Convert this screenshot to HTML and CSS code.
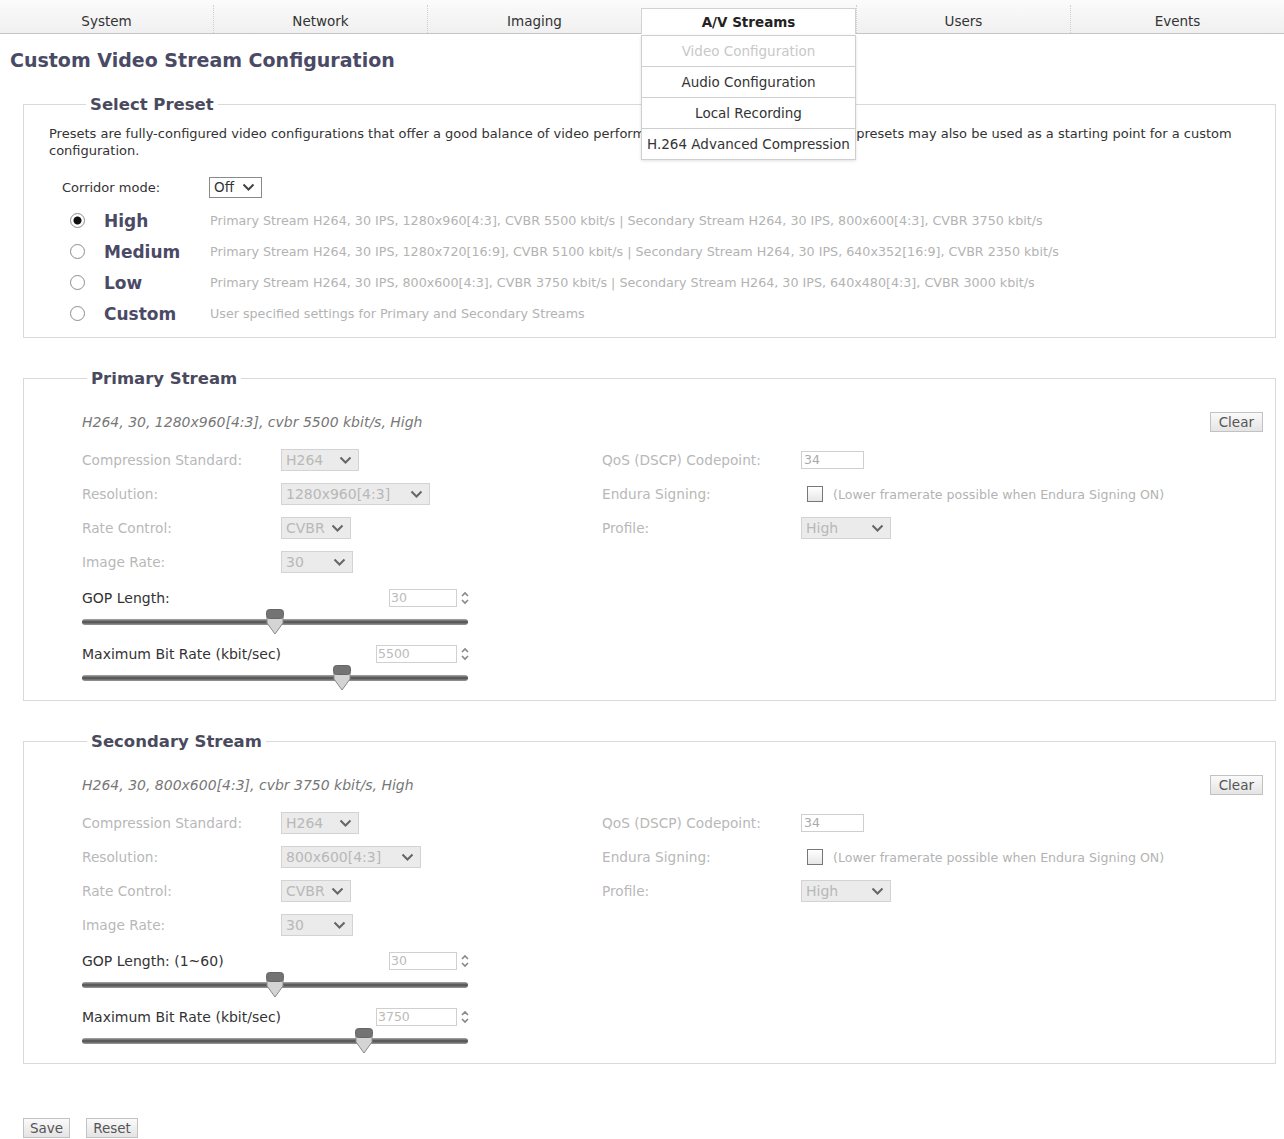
FILE: index.html
```html
<!DOCTYPE html>
<html lang="en">
<head>
    <meta charset="UTF-8">
    <meta name="viewport" content="width=device-width, initial-scale=1.0">
    <title>Video Configuration</title>
    <link rel="stylesheet" href="styles.css">
</head>
<body>
    <nav class="tabs">
        <div class="tab">System</div>
        <div class="tab">Network</div>
        <div class="tab">Imaging</div>
        <div class="tab active">A/V Streams
            <div class="menu">
                <div class="menu-item disabled">Video Configuration</div>
                <div class="menu-item">Audio Configuration</div>
                <div class="menu-item">Local Recording</div>
                <div class="menu-item">H.264 Advanced Compression</div>
            </div>
        </div>
        <div class="tab">Users</div>
        <div class="tab">Events</div>
    </nav>

    <div class="page">
        <h1 class="title">Custom Video Stream Configuration</h1>

        <fieldset class="box preset">
            <legend>Select Preset</legend>
            <p class="intro">Presets are fully-configured video configurations that offer a good balance of video performance and bandwidth use. These presets may also be used as a starting point for a custom configuration.</p>
            <div class="corridor">
                <span class="corridor-label">Corridor mode:</span>
                <div class="dd dd-on dd-corridor"><span>Off</span><svg class="chev" width="13" height="8" viewBox="0 0 13 8"><path d="M1.5 1.5 L6.5 6.5 L11.5 1.5" fill="none" stroke="#444" stroke-width="2"/></svg></div>
            </div>
            <div class="presets">
                <div class="radio checked"></div><span class="preset-name">High</span><span class="preset-desc">Primary Stream H264, 30 IPS, 1280x960[4:3], CVBR 5500 kbit/s | Secondary Stream H264, 30 IPS, 800x600[4:3], CVBR 3750 kbit/s</span>
                <div class="radio"></div><span class="preset-name">Medium</span><span class="preset-desc">Primary Stream H264, 30 IPS, 1280x720[16:9], CVBR 5100 kbit/s | Secondary Stream H264, 30 IPS, 640x352[16:9], CVBR 2350 kbit/s</span>
                <div class="radio"></div><span class="preset-name">Low</span><span class="preset-desc">Primary Stream H264, 30 IPS, 800x600[4:3], CVBR 3750 kbit/s | Secondary Stream H264, 30 IPS, 640x480[4:3], CVBR 3000 kbit/s</span>
                <div class="radio"></div><span class="preset-name">Custom</span><span class="preset-desc">User specified settings for Primary and Secondary Streams</span>
            </div>
        </fieldset>

        <fieldset class="box stream">
            <legend>Primary Stream</legend>
            <div class="summary">
                <span class="summary-text">H264, 30, 1280x960[4:3], cvbr 5500 kbit/s, High</span>
                <button class="btn">Clear</button>
            </div>
            <div class="stream-body">
                <div class="stream-left">
                    <div class="field"><span class="field-label">Compression Standard:</span><div class="dd dd-std"><span>H264</span><svg class="chev" width="13" height="8" viewBox="0 0 13 8"><path d="M1.5 1.5 L6.5 6.5 L11.5 1.5" fill="none" stroke="#666" stroke-width="2"/></svg></div></div>
                    <div class="field"><span class="field-label">Resolution:</span><div class="dd dd-res"><span>1280x960[4:3]</span><svg class="chev" width="13" height="8" viewBox="0 0 13 8"><path d="M1.5 1.5 L6.5 6.5 L11.5 1.5" fill="none" stroke="#666" stroke-width="2"/></svg></div></div>
                    <div class="field"><span class="field-label">Rate Control:</span><div class="dd dd-rate"><span>CVBR</span><svg class="chev" width="13" height="8" viewBox="0 0 13 8"><path d="M1.5 1.5 L6.5 6.5 L11.5 1.5" fill="none" stroke="#666" stroke-width="2"/></svg></div></div>
                    <div class="field"><span class="field-label">Image Rate:</span><div class="dd dd-fps"><span>30</span><svg class="chev" width="13" height="8" viewBox="0 0 13 8"><path d="M1.5 1.5 L6.5 6.5 L11.5 1.5" fill="none" stroke="#666" stroke-width="2"/></svg></div></div>

                    <div class="slider-group">
                        <div class="slider-head">
                            <span class="slider-label">GOP Length:</span>
                            <div class="spin"><span class="num num-short">30</span><svg width="10" height="16" viewBox="0 0 10 16"><path d="M2 6 L5 3 L8 6 M2 10 L5 13 L8 10" fill="none" stroke="#888" stroke-width="1.6"/></svg></div>
                        </div>
                        <div class="slider">
                            <div class="track"></div>
                            <svg class="thumb" style="left: 50%" width="20" height="27" viewBox="0 0 20 27"><path d="M2 9 V15 L10 26 L18 15 V9 Z" fill="#d4d4d4" stroke="#8a8a8a"/><rect x="1.5" y="1.5" width="17" height="9" rx="3" fill="#737373" stroke="#666"/></svg>
                        </div>
                    </div>
                    <div class="slider-group">
                        <div class="slider-head">
                            <span class="slider-label">Maximum Bit Rate (kbit/sec)</span>
                            <div class="spin"><span class="num">5500</span><svg width="10" height="16" viewBox="0 0 10 16"><path d="M2 6 L5 3 L8 6 M2 10 L5 13 L8 10" fill="none" stroke="#888" stroke-width="1.6"/></svg></div>
                        </div>
                        <div class="slider">
                            <div class="track"></div>
                            <svg class="thumb" style="left: 67.4%" width="20" height="27" viewBox="0 0 20 27"><path d="M2 9 V15 L10 26 L18 15 V9 Z" fill="#d4d4d4" stroke="#8a8a8a"/><rect x="1.5" y="1.5" width="17" height="9" rx="3" fill="#737373" stroke="#666"/></svg>
                        </div>
                    </div>
                </div>
                <div class="stream-right">
                    <div class="field"><span class="field-label">QoS (DSCP) Codepoint:</span><span class="text-box">34</span></div>
                    <div class="field"><span class="field-label">Endura Signing:</span><span class="check"></span><span class="hint">(Lower framerate possible when Endura Signing ON)</span></div>
                    <div class="field"><span class="field-label">Profile:</span><div class="dd dd-profile"><span>High</span><svg class="chev" width="13" height="8" viewBox="0 0 13 8"><path d="M1.5 1.5 L6.5 6.5 L11.5 1.5" fill="none" stroke="#666" stroke-width="2"/></svg></div></div>
                </div>
            </div>
        </fieldset>

        <fieldset class="box stream">
            <legend>Secondary Stream</legend>
            <div class="summary">
                <span class="summary-text">H264, 30, 800x600[4:3], cvbr 3750 kbit/s, High</span>
                <button class="btn">Clear</button>
            </div>
            <div class="stream-body">
                <div class="stream-left">
                    <div class="field"><span class="field-label">Compression Standard:</span><div class="dd dd-std"><span>H264</span><svg class="chev" width="13" height="8" viewBox="0 0 13 8"><path d="M1.5 1.5 L6.5 6.5 L11.5 1.5" fill="none" stroke="#666" stroke-width="2"/></svg></div></div>
                    <div class="field"><span class="field-label">Resolution:</span><div class="dd dd-res2"><span>800x600[4:3]</span><svg class="chev" width="13" height="8" viewBox="0 0 13 8"><path d="M1.5 1.5 L6.5 6.5 L11.5 1.5" fill="none" stroke="#666" stroke-width="2"/></svg></div></div>
                    <div class="field"><span class="field-label">Rate Control:</span><div class="dd dd-rate"><span>CVBR</span><svg class="chev" width="13" height="8" viewBox="0 0 13 8"><path d="M1.5 1.5 L6.5 6.5 L11.5 1.5" fill="none" stroke="#666" stroke-width="2"/></svg></div></div>
                    <div class="field"><span class="field-label">Image Rate:</span><div class="dd dd-fps"><span>30</span><svg class="chev" width="13" height="8" viewBox="0 0 13 8"><path d="M1.5 1.5 L6.5 6.5 L11.5 1.5" fill="none" stroke="#666" stroke-width="2"/></svg></div></div>

                    <div class="slider-group">
                        <div class="slider-head">
                            <span class="slider-label">GOP Length: (1~60)</span>
                            <div class="spin"><span class="num num-short">30</span><svg width="10" height="16" viewBox="0 0 10 16"><path d="M2 6 L5 3 L8 6 M2 10 L5 13 L8 10" fill="none" stroke="#888" stroke-width="1.6"/></svg></div>
                        </div>
                        <div class="slider">
                            <div class="track"></div>
                            <svg class="thumb" style="left: 50%" width="20" height="27" viewBox="0 0 20 27"><path d="M2 9 V15 L10 26 L18 15 V9 Z" fill="#d4d4d4" stroke="#8a8a8a"/><rect x="1.5" y="1.5" width="17" height="9" rx="3" fill="#737373" stroke="#666"/></svg>
                        </div>
                    </div>
                    <div class="slider-group">
                        <div class="slider-head">
                            <span class="slider-label">Maximum Bit Rate (kbit/sec)</span>
                            <div class="spin"><span class="num">3750</span><svg width="10" height="16" viewBox="0 0 10 16"><path d="M2 6 L5 3 L8 6 M2 10 L5 13 L8 10" fill="none" stroke="#888" stroke-width="1.6"/></svg></div>
                        </div>
                        <div class="slider">
                            <div class="track"></div>
                            <svg class="thumb" style="left: 73.1%" width="20" height="27" viewBox="0 0 20 27"><path d="M2 9 V15 L10 26 L18 15 V9 Z" fill="#d4d4d4" stroke="#8a8a8a"/><rect x="1.5" y="1.5" width="17" height="9" rx="3" fill="#737373" stroke="#666"/></svg>
                        </div>
                    </div>
                </div>
                <div class="stream-right">
                    <div class="field"><span class="field-label">QoS (DSCP) Codepoint:</span><span class="text-box">34</span></div>
                    <div class="field"><span class="field-label">Endura Signing:</span><span class="check"></span><span class="hint">(Lower framerate possible when Endura Signing ON)</span></div>
                    <div class="field"><span class="field-label">Profile:</span><div class="dd dd-profile"><span>High</span><svg class="chev" width="13" height="8" viewBox="0 0 13 8"><path d="M1.5 1.5 L6.5 6.5 L11.5 1.5" fill="none" stroke="#666" stroke-width="2"/></svg></div></div>
                </div>
            </div>
        </fieldset>

        <div class="actions">
            <button class="btn btn-save">Save</button>
            <button class="btn btn-reset">Reset</button>
        </div>
    </div>
</body>
</html>
```

FILE: styles.css
```css
* {
    box-sizing: border-box;
}
body {
    margin: 0;
    background: #fff;
    color: #333;
    font-family: "DejaVu Sans", Verdana, sans-serif;
    font-size: 13px;
}

/* top navigation */
.tabs {
    display: flex;
    height: 34px;
    background: linear-gradient(#fbfbfb, #f0f0f0);
    border-bottom: 1px solid #c4c4c4;
}
.tab {
    flex: 1;
    height: 28px;
    margin-top: 5px;
    padding-top: 4px;
    display: flex;
    justify-content: center;
    align-items: center;
    border-left: 1px dotted #cfcfcf;
    font-size: 13.5px;
    color: #333;
}
.tab:first-child {
    border-left: none;
}
.tab.active {
    position: relative;
    height: 26px;
    margin-top: 8px;
    padding-top: 0;
    background: #fff;
    border: 1px solid #d2d2d2;
    border-bottom: none;
    font-weight: bold;
    color: #222;
}
.menu {
    position: absolute;
    top: 26px;
    left: -1px;
    right: -1px;
    background: #fff;
    border: 1px solid #cfcfcf;
    border-bottom: none;
    box-shadow: 0 1px 3px rgba(0, 0, 0, 0.12);
    font-weight: normal;
    z-index: 5;
}
.menu-item {
    height: 31px;
    display: flex;
    justify-content: center;
    align-items: center;
    border-bottom: 1px solid #cfcfcf;
    font-size: 13.5px;
    color: #333;
    white-space: nowrap;
}
.menu-item.disabled {
    color: #c8c8c8;
}

.page {
    padding: 0 8px 0 23px;
}
.title {
    margin: 15px 0 24px -13px;
    font-size: 19px;
    color: #4a4a66;
}

/* fieldsets */
.box {
    margin: 0;
    border: 1px solid #d9d9d9;
    min-width: 0;
}
.box legend {
    padding: 0 4px;
    font-size: 16.5px;
    font-weight: bold;
    color: #4a4a5e;
}
.preset {
    padding: 11px 8px 8px 25px;
}
.preset legend {
    margin-left: 37px;
}
.intro {
    margin: 0;
    font-size: 13px;
    line-height: 17px;
    color: #333;
}
.corridor {
    display: flex;
    align-items: center;
    height: 24px;
    margin-top: 16px;
    padding-left: 13px;
}
.corridor-label {
    width: 147px;
    font-size: 13px;
}
.presets {
    display: grid;
    grid-template-columns: 34px 106px 1fr;
    grid-auto-rows: 31px;
    align-items: center;
    margin-top: 6px;
    padding-left: 21px;
}
.radio {
    width: 15px;
    height: 15px;
    border: 1px solid #8c8c8c;
    border-radius: 50%;
    background: #fff;
}
.radio.checked {
    background: radial-gradient(circle, #111 0, #111 3.5px, #fff 4.5px);
}
.preset-name {
    font-size: 17px;
    font-weight: bold;
    color: #4a4a66;
}
.preset-desc {
    font-size: 12.7px;
    color: #b3b3b3;
    white-space: nowrap;
}

/* dropdowns */
.dd {
    display: flex;
    align-items: center;
    justify-content: space-between;
    height: 22px;
    padding: 0 6px 0 4px;
    background: #ebebeb;
    border: 1px solid #d3d3d3;
    color: #b8b8b8;
    font-size: 14px;
}
.dd-on {
    background: #fff;
    border-color: #8a8a8a;
    color: #333;
    height: 21px;
    font-size: 13.5px;
}
.dd-corridor { width: 53px; }
.dd-std { width: 78px; }
.dd-res { width: 149px; }
.dd-res2 { width: 140px; }
.dd-rate { width: 70px; }
.dd-fps { width: 72px; }
.dd-profile { width: 90px; }

/* stream sections */
.stream {
    margin-top: 31px;
    padding: 12px 12px 10px 58px;
}
.stream legend {
    margin-left: 5px;
}
.summary {
    display: flex;
    justify-content: space-between;
    align-items: center;
    height: 24px;
    margin-top: 10px;
}
.summary-text {
    font-style: italic;
    font-size: 14px;
    color: #777;
}
.stream-body {
    display: flex;
    margin-top: 9px;
}
.stream-left {
    width: 520px;
}
.field {
    display: flex;
    align-items: center;
    height: 34px;
}
.field-label {
    width: 199px;
    font-size: 13.7px;
    color: #b8b8b8;
}
.text-box {
    width: 63px;
    height: 18px;
    padding-left: 2px;
    border: 1px solid #cfcfcf;
    font-size: 12.5px;
    line-height: 16px;
    color: #aaa;
}
.check {
    width: 16px;
    height: 16px;
    margin-left: 6px;
    border: 1px solid #777;
    background: linear-gradient(#fff, #e6e6e6);
}
.hint {
    margin-left: 10px;
    font-size: 12.6px;
    color: #b3b3b3;
}

/* sliders */
.slider-group {
    width: 388px;
    margin-top: 8px;
}
.slider-group + .slider-group {
    margin-top: 9px;
}
.slider-head {
    display: flex;
    justify-content: space-between;
    align-items: center;
    height: 22px;
}
.slider-label {
    font-size: 14px;
    color: #333;
}
.spin {
    display: flex;
    align-items: center;
    gap: 3px;
}
.num {
    width: 81px;
    height: 18px;
    padding-left: 1px;
    border: 1px solid #d0d0d0;
    font-size: 12.5px;
    line-height: 16px;
    color: #bbb;
}
.num-short {
    width: 68px;
}
.slider {
    position: relative;
    height: 24px;
    width: 386px;
    margin-top: 1px;
    display: flex;
    align-items: center;
}
.track {
    width: 100%;
    height: 6px;
    border-radius: 3px;
    background: linear-gradient(#aaa, #4c4c4c 50%, #9a9a9a);
}
.thumb {
    position: absolute;
    top: -2px;
    margin-left: -10px;
}

/* buttons */
.btn {
    height: 20px;
    padding: 0 6px;
    border: 1px solid #c2c2c2;
    background: linear-gradient(#fafafa, #e4e4e4);
    font-family: "DejaVu Sans", Verdana, sans-serif;
    font-size: 13.5px;
    color: #555;
}
.summary .btn {
    padding: 0 8px;
}
.actions {
    display: flex;
    gap: 16px;
    margin-top: 54px;
}
```
